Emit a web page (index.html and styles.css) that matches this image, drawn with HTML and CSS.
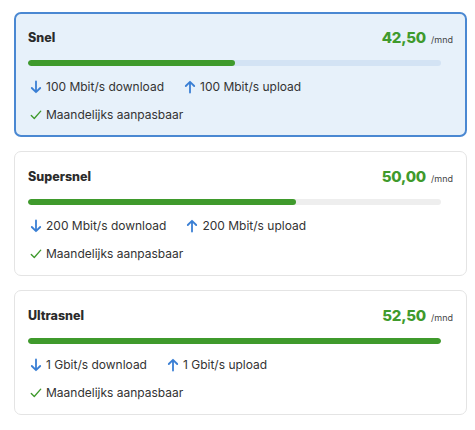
FILE: index.html
```
<!DOCTYPE html>
<html lang="nl">
<head>
<meta charset="utf-8">
<title>Abonnementen</title>
<link rel="stylesheet" href="styles.css">
</head>
<body>
<div class="list">
  <div class="card selected">
    <div class="head">
      <span class="name">Snel</span>
      <span class="price"><span class="amount">42,50</span><span class="per">/mnd</span></span>
    </div>
    <div class="bar"><div class="fill" style="width:50%"></div></div>
    <div class="specs">
      <span class="spec"><svg class="arrow" viewBox="0 0 12 14"><path d="M6 1.5V12M1.8 8 6 12.2 10.2 8"/></svg>100 Mbit/s download</span>
      <span class="spec"><svg class="arrow" viewBox="0 0 12 14"><path d="M6 12.5V2M1.8 6 6 1.8 10.2 6"/></svg>100 Mbit/s upload</span>
    </div>
    <div class="feature"><svg class="check" viewBox="0 0 14 14"><path d="M1.5 7.5 5 11 12.5 2.5"/></svg>Maandelijks aanpasbaar</div>
  </div>
  <div class="card">
    <div class="head">
      <span class="name">Supersnel</span>
      <span class="price"><span class="amount">50,00</span><span class="per">/mnd</span></span>
    </div>
    <div class="bar"><div class="fill" style="width:65%"></div></div>
    <div class="specs">
      <span class="spec"><svg class="arrow" viewBox="0 0 12 14"><path d="M6 1.5V12M1.8 8 6 12.2 10.2 8"/></svg>200 Mbit/s download</span>
      <span class="spec"><svg class="arrow" viewBox="0 0 12 14"><path d="M6 12.5V2M1.8 6 6 1.8 10.2 6"/></svg>200 Mbit/s upload</span>
    </div>
    <div class="feature"><svg class="check" viewBox="0 0 14 14"><path d="M1.5 7.5 5 11 12.5 2.5"/></svg>Maandelijks aanpasbaar</div>
  </div>
  <div class="card">
    <div class="head">
      <span class="name">Ultrasnel</span>
      <span class="price"><span class="amount">52,50</span><span class="per">/mnd</span></span>
    </div>
    <div class="bar"><div class="fill" style="width:100%"></div></div>
    <div class="specs">
      <span class="spec"><svg class="arrow" viewBox="0 0 12 14"><path d="M6 1.5V12M1.8 8 6 12.2 10.2 8"/></svg>1 Gbit/s download</span>
      <span class="spec"><svg class="arrow" viewBox="0 0 12 14"><path d="M6 12.5V2M1.8 6 6 1.8 10.2 6"/></svg>1 Gbit/s upload</span>
    </div>
    <div class="feature"><svg class="check" viewBox="0 0 14 14"><path d="M1.5 7.5 5 11 12.5 2.5"/></svg>Maandelijks aanpasbaar</div>
  </div>
</div>
</body>
</html>
```
FILE: styles.css
```
html, body {
  margin: 0;
  background: #ffffff;
}
body {
  font-family: Inter, "Noto Sans", "Liberation Sans", sans-serif;
  color: #333333;
}
.list {
  display: flex;
  flex-direction: column;
  gap: 14px;
  padding: 12px 8px 0 14px;
}
.card {
  border: 1px solid #e4e4e4;
  border-radius: 7px;
  background: #ffffff;
  padding: 15px 13px 11px 13px;
  height: 125px;
  box-sizing: border-box;
}
.card.selected {
  border: 2px solid #4a88d2;
  background: #e7f1fa;
  padding: 14px 12px 10px 12px;
}
.head {
  display: flex;
  justify-content: space-between;
  align-items: center;
  height: 18px;
}
.name {
  font-weight: 800;
  font-size: 12.5px;
  color: #2b2b2b;
}
.price {
  display: flex;
  align-items: baseline;
  gap: 5px;
}
.amount {
  font-weight: 800;
  font-size: 15px;
  color: #3f9a2c;
  letter-spacing: -0.2px;
}
.per {
  font-size: 9px;
  color: #444444;
}
.bar {
  margin-top: 14px;
  margin-right: 12px;
  height: 6px;
  border-radius: 3px;
  background: #eeeeee;
  overflow: hidden;
}
.selected .bar {
  background: #d3e3f4;
}
.fill {
  height: 100%;
  background: #3f9a2c;
  border-radius: 3px;
}
.specs {
  margin-top: 12px;
  display: flex;
  gap: 18px;
  height: 18px;
  align-items: center;
}
.spec, .feature {
  display: flex;
  align-items: center;
  font-size: 12px;
  line-height: 18px;
  color: #333333;
}
.feature {
  margin-top: 10px;
}
.arrow {
  width: 12px;
  height: 14px;
  margin: 0 4px 0 2px;
  fill: none;
  stroke: #3a7fd4;
  stroke-width: 1.8;
  stroke-linecap: round;
  stroke-linejoin: round;
}
.check {
  width: 12px;
  height: 12px;
  margin: 0 4px 0 2px;
  fill: none;
  stroke: #3f9a2c;
  stroke-width: 1.6;
  stroke-linecap: round;
  stroke-linejoin: round;
}
```
